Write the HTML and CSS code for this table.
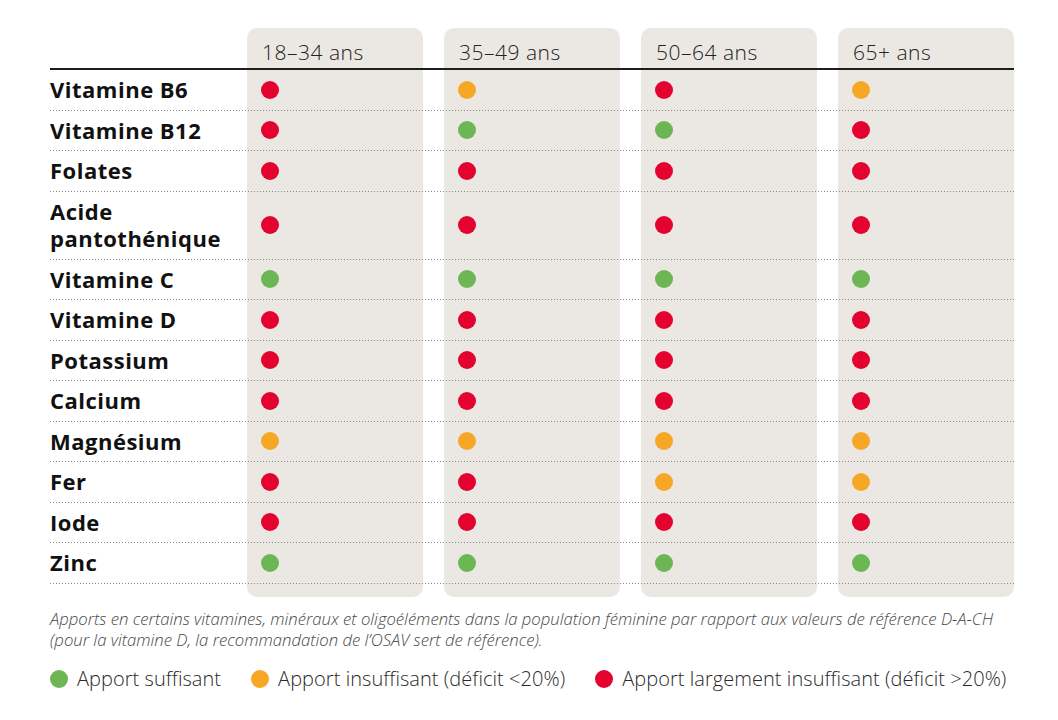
FILE: index.html
```html
<!DOCTYPE html>
<html lang="fr">
<head>
<meta charset="utf-8">
<title>Apports nutritionnels</title>
<link rel="stylesheet" href="styles.css">
</head>
<body>
<div class="chart">
  <div class="table">
    <div class="bgs">
      <div class="colbg"></div>
      <div class="colbg"></div>
      <div class="colbg"></div>
      <div class="colbg"></div>
    </div>
    <div class="rows">
      <div class="row head">
        <div class="label"></div>
        <div class="cell">18–34 ans</div>
        <div class="cell">35–49 ans</div>
        <div class="cell">50–64 ans</div>
        <div class="cell">65+ ans</div>
      </div>
      <div class="row">
        <div class="label">Vitamine B6</div>
        <div class="cell"><span class="dot red"></span></div>
        <div class="cell"><span class="dot orange"></span></div>
        <div class="cell"><span class="dot red"></span></div>
        <div class="cell"><span class="dot orange"></span></div>
      </div>
      <div class="row">
        <div class="label">Vitamine B12</div>
        <div class="cell"><span class="dot red"></span></div>
        <div class="cell"><span class="dot green"></span></div>
        <div class="cell"><span class="dot green"></span></div>
        <div class="cell"><span class="dot red"></span></div>
      </div>
      <div class="row">
        <div class="label">Folates</div>
        <div class="cell"><span class="dot red"></span></div>
        <div class="cell"><span class="dot red"></span></div>
        <div class="cell"><span class="dot red"></span></div>
        <div class="cell"><span class="dot red"></span></div>
      </div>
      <div class="row">
        <div class="label">Acide pantothénique</div>
        <div class="cell"><span class="dot red"></span></div>
        <div class="cell"><span class="dot red"></span></div>
        <div class="cell"><span class="dot red"></span></div>
        <div class="cell"><span class="dot red"></span></div>
      </div>
      <div class="row">
        <div class="label">Vitamine C</div>
        <div class="cell"><span class="dot green"></span></div>
        <div class="cell"><span class="dot green"></span></div>
        <div class="cell"><span class="dot green"></span></div>
        <div class="cell"><span class="dot green"></span></div>
      </div>
      <div class="row">
        <div class="label">Vitamine D</div>
        <div class="cell"><span class="dot red"></span></div>
        <div class="cell"><span class="dot red"></span></div>
        <div class="cell"><span class="dot red"></span></div>
        <div class="cell"><span class="dot red"></span></div>
      </div>
      <div class="row">
        <div class="label">Potassium</div>
        <div class="cell"><span class="dot red"></span></div>
        <div class="cell"><span class="dot red"></span></div>
        <div class="cell"><span class="dot red"></span></div>
        <div class="cell"><span class="dot red"></span></div>
      </div>
      <div class="row">
        <div class="label">Calcium</div>
        <div class="cell"><span class="dot red"></span></div>
        <div class="cell"><span class="dot red"></span></div>
        <div class="cell"><span class="dot red"></span></div>
        <div class="cell"><span class="dot red"></span></div>
      </div>
      <div class="row">
        <div class="label">Magnésium</div>
        <div class="cell"><span class="dot orange"></span></div>
        <div class="cell"><span class="dot orange"></span></div>
        <div class="cell"><span class="dot orange"></span></div>
        <div class="cell"><span class="dot orange"></span></div>
      </div>
      <div class="row">
        <div class="label">Fer</div>
        <div class="cell"><span class="dot red"></span></div>
        <div class="cell"><span class="dot red"></span></div>
        <div class="cell"><span class="dot orange"></span></div>
        <div class="cell"><span class="dot orange"></span></div>
      </div>
      <div class="row">
        <div class="label">Iode</div>
        <div class="cell"><span class="dot red"></span></div>
        <div class="cell"><span class="dot red"></span></div>
        <div class="cell"><span class="dot red"></span></div>
        <div class="cell"><span class="dot red"></span></div>
      </div>
      <div class="row">
        <div class="label">Zinc</div>
        <div class="cell"><span class="dot green"></span></div>
        <div class="cell"><span class="dot green"></span></div>
        <div class="cell"><span class="dot green"></span></div>
        <div class="cell"><span class="dot green"></span></div>
      </div>
    </div>
  </div>
  <p class="caption">Apports en certains vitamines, minéraux et oligoéléments dans la population féminine par rapport aux valeurs de référence D-A-CH<br>(pour la vitamine D, la recommandation de l’OSAV sert de référence).</p>
  <div class="legend">
    <div class="item"><span class="dot green"></span>Apport suffisant</div>
    <div class="item"><span class="dot orange"></span>Apport insuffisant (déficit &lt;20%)</div>
    <div class="item"><span class="dot red"></span>Apport largement insuffisant (déficit &gt;20%)</div>
  </div>
</div>
</body>
</html>
```
FILE: styles.css
```css
html, body {
  margin: 0;
  padding: 0;
  background: #ffffff;
}

body {
  font-family: "Open Sans", "Noto Sans", "Liberation Sans", sans-serif;
  color: #1a1a1a;
}

.chart {
  padding: 28px 0 0 50px;
  width: 964px;
}

.table {
  display: grid;
  grid-template-columns: 964px;
}

.bgs,
.rows {
  grid-area: 1 / 1;
}

.bgs {
  display: flex;
  gap: 21px;
  padding-left: 197px;
}

.colbg {
  width: 176px;
  background: #ebe8e4;
  border-radius: 10px;
}

.rows {
  display: flex;
  flex-direction: column;
  padding-bottom: 13px;
}

.row {
  display: flex;
  gap: 21px;
  padding: 6px 0 7px;
  background-image: linear-gradient(to right, #8c8c8c 1px, transparent 1px);
  background-size: 3px 1px;
  background-repeat: repeat-x;
  background-position: left bottom;
}

.row.head {
  padding: 10px 0 2px;
  background: none;
  border-bottom: 2px solid #1e1e1e;
}

.label {
  width: 176px;
  flex: none;
  font-size: 22px;
  font-weight: 700;
  letter-spacing: 0.5px;
  line-height: 27.5px;
  color: #111;
}

.cell {
  width: 176px;
  flex: none;
  display: flex;
  align-items: center;
  padding-left: 14px;
  box-sizing: border-box;
}

.head .cell {
  padding-left: 15px;
  font-size: 21px;
  font-weight: 300;
  letter-spacing: 0.5px;
  line-height: 28px;
  color: #222;
}

.dot {
  display: inline-block;
  width: 18px;
  height: 18px;
  border-radius: 50%;
  flex: none;
}

.red { background: #e3032e; }
.orange { background: #f6a726; }
.green { background: #6cb655; }

.caption {
  margin: 11px 0 0;
  font-size: 16.7px;
  font-style: italic;
  font-weight: 300;
  line-height: 21px;
  color: #474747;
}

.legend {
  display: flex;
  gap: 30px;
  margin-top: 16px;
  font-size: 20px;
  font-weight: 300;
  letter-spacing: 0.05px;
  line-height: 26px;
  color: #2a2a2a;
}

.item {
  display: flex;
  align-items: center;
  gap: 9px;
}
```
